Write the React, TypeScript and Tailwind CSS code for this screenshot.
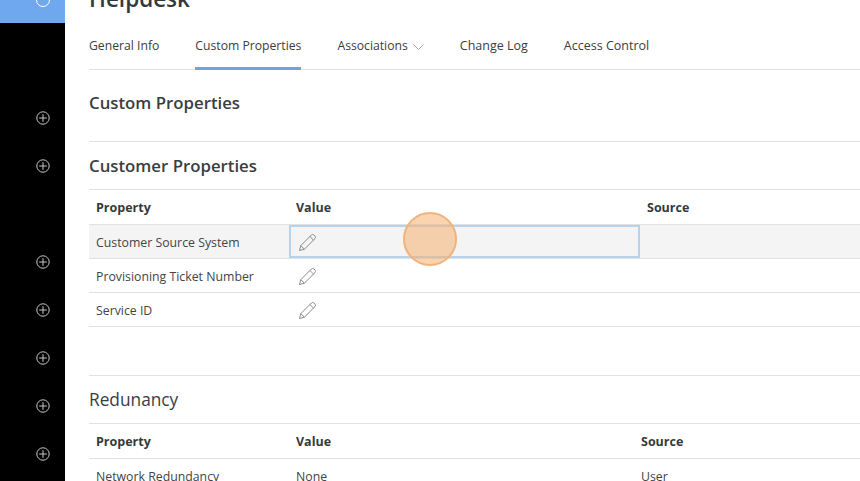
const font = { fontFamily: '"Open Sans", "Noto Sans", sans-serif' };

function PlusCircle() {
  return (
    <svg width="14" height="14" viewBox="0 0 14 14" fill="none" stroke="#c8c8c8" strokeWidth="1">
      <circle cx="7" cy="7" r="6.2" />
      <path d="M7 3.2v7.6M3.2 7h7.6" />
    </svg>
  );
}

function PencilIcon() {
  return (
    <svg width="19" height="19" viewBox="0 0 19 19" fill="none" stroke="#8a8a8a" strokeWidth="1" className="mt-[2px] shrink-0">
      <path d="M1.5 17.5 L2.8 12.6 L13.4 2 Q14.6 0.9 15.8 1.9 L17.1 3.2 Q18.1 4.4 17 5.6 L6.4 16.2 Z" />
      <path d="M2.8 12.6 L6.4 16.2 M11.9 3.5 L15.5 7.1" />
    </svg>
  );
}

function Tab({ label, active, chevron, wide }: { label: string; active?: boolean; chevron?: boolean; wide?: boolean }) {
  return (
    <div className={`flex h-[38px] items-center gap-[5px] pb-[7px] text-[#3c3c3c] border-b-[3px] ${wide ? 'text-[12.5px]' : 'text-[12.2px]'} ${active ? 'border-[#6fa3dc]' : 'border-transparent'}`}>
      {label}
      {chevron && (
        <svg width="11" height="6" viewBox="0 0 11 6" fill="none" stroke="#a6a6a6" strokeWidth="1" className="mt-[2px]">
          <path d="M0.5 0.5 L5.5 5.5 L10.5 0.5" />
        </svg>
      )}
    </div>
  );
}

function HeaderRow({ source }: { source: string }) {
  return (
    <div className={`grid h-[35px] items-center border-b border-[#e1e1e1] pt-[2px] text-[12.5px] font-bold text-[#333a40] ${source}`}>
      <div className="pl-[7px]">Property</div>
      <div className="pl-[7px]">Value</div>
      <div className="pl-[7px]">Source</div>
    </div>
  );
}

function EditRow({ label, selected }: { label: string; selected?: boolean }) {
  return (
    <div className={`grid h-[34px] grid-cols-[200px_351px_1fr] items-stretch border-b border-[#e1e1e1] text-[12.3px] text-[#444] ${selected ? 'bg-[#f4f4f4]' : ''}`}>
      <div className="flex items-center pl-[7px] pt-[4px]">{label}</div>
      <div className={`flex items-center pl-[7px] ${selected ? 'border-2 border-[#b9d2ec]' : 'border-2 border-transparent'}`}>
        <PencilIcon />
      </div>
      <div />
    </div>
  );
}

export default function App() {
  return (
    <div style={font} className="relative flex h-[481px] w-[860px] overflow-hidden bg-white">
      <aside className="flex h-full w-[65px] shrink-0 flex-col items-center bg-black">
        <div className="flex h-[23px] w-full justify-center overflow-hidden bg-[#6fa8ee] pl-[21px]">
          <div className="-mt-[7px] h-[14px] w-[14px] shrink-0 rounded-full border border-white" />
        </div>
        <div className="flex flex-col pl-[21px]">
          <div className="mt-[88px]"><PlusCircle /></div>
          <div className="mt-[34px]"><PlusCircle /></div>
          <div className="mt-[82px]"><PlusCircle /></div>
          <div className="mt-[34px]"><PlusCircle /></div>
          <div className="mt-[34px]"><PlusCircle /></div>
          <div className="mt-[34px]"><PlusCircle /></div>
          <div className="mt-[34px]"><PlusCircle /></div>
        </div>
      </aside>

      <main className="min-w-0 flex-1 pl-[24px]">
        <h1 className="-mt-[18px] h-[33px] text-[22.5px] leading-[33px] font-semibold text-[#33393e]">Helpdesk</h1>
        <nav className="mt-[17px] flex h-[38px] gap-[36px] border-b border-[#e1e1e1]">
          <Tab label="General Info" />
          <Tab label="Custom Properties" active />
          <Tab label="Associations" chevron />
          <Tab label="Change Log" wide />
          <Tab label="Access Control" wide />
        </nav>

        <h2 className="flex h-[72px] items-center border-b border-[#e1e1e1] pb-[6px] text-[16.8px] font-semibold text-[#383e43]">Custom Properties</h2>

        <h2 className="flex h-[48px] items-center border-b border-[#e1e1e1] pt-[1px] text-[16.8px] font-semibold text-[#383e43]">Customer Properties</h2>
        <HeaderRow source="grid-cols-[200px_351px_1fr]" />
        <EditRow label="Customer Source System" selected />
        <EditRow label="Provisioning Ticket Number" />
        <EditRow label="Service ID" />

        <div className="h-[49px] border-b border-[#e1e1e1]" />

        <h2 className="flex h-[48px] items-center border-b border-[#e1e1e1] text-[17.3px] font-medium text-[#383e43]">Redunancy</h2>
        <HeaderRow source="grid-cols-[200px_345px_1fr]" />
        <div className="grid h-[34px] grid-cols-[200px_345px_1fr] items-center pt-[2px] text-[12.3px] text-[#444]">
          <div className="pl-[7px]">Network Redundancy</div>
          <div className="pl-[7px]">None</div>
          <div className="pl-[7px]">User</div>
        </div>
      </main>

      <div className="absolute left-[403px] top-[212px] h-[54px] w-[54px] rounded-full border-2 border-[#f3b27a] bg-[#f5b070]/55" />
    </div>
  );
}
